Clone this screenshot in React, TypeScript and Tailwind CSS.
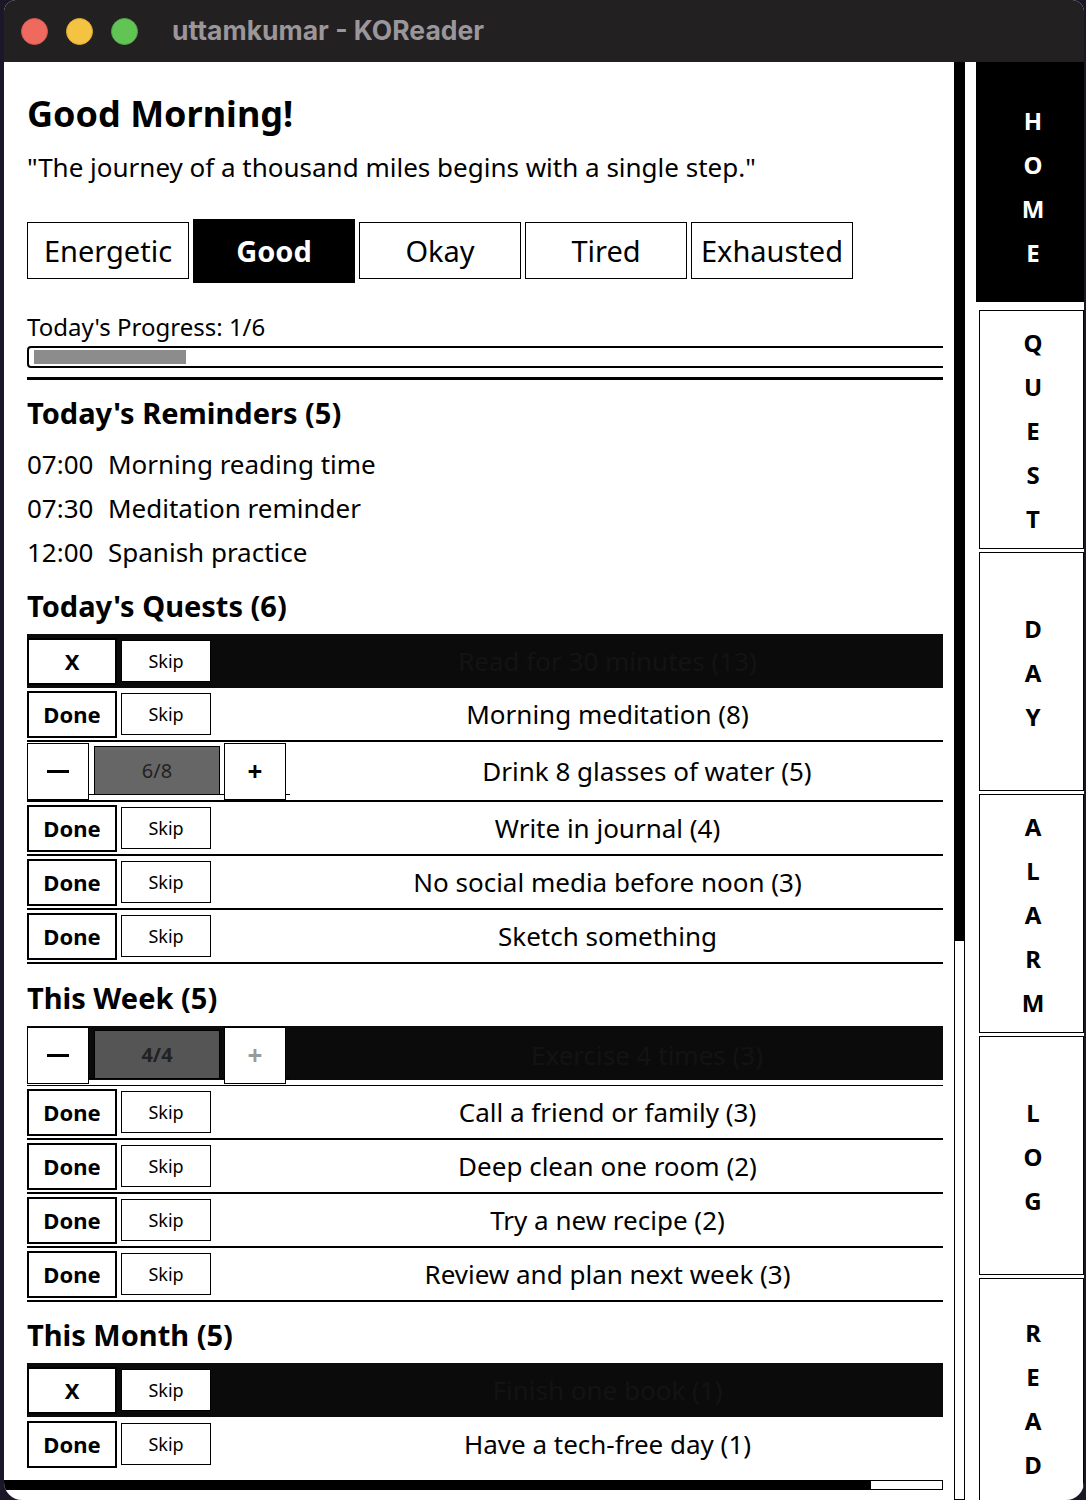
import clsx from 'clsx';

type Quest = {
  title: string;
  done?: boolean;
  count?: [number, number];
};

const moods = ['Energetic', 'Good', 'Okay', 'Tired', 'Exhausted'];

const reminders = [
  ['07:00', 'Morning reading time'],
  ['07:30', 'Meditation reminder'],
  ['12:00', 'Spanish practice'],
];

const today: Quest[] = [
  { title: 'Read for 30 minutes (13)', done: true },
  { title: 'Morning meditation (8)' },
  { title: 'Drink 8 glasses of water (5)', count: [6, 8] },
  { title: 'Write in journal (4)' },
  { title: 'No social media before noon (3)' },
  { title: 'Sketch something' },
];

const week: Quest[] = [
  { title: 'Exercise 4 times (3)', done: true, count: [4, 4] },
  { title: 'Call a friend or family (3)' },
  { title: 'Deep clean one room (2)' },
  { title: 'Try a new recipe (2)' },
  { title: 'Review and plan next week (3)' },
];

const month: Quest[] = [
  { title: 'Finish one book (1)', done: true },
  { title: 'Have a tech-free day (1)' },
];

const tabs = ['HOME', 'QUEST', 'DAY', 'ALARM', 'LOG', 'READ'];

function TitleBar() {
  return (
    <div className="h-[62px] shrink-0 bg-[#232022] flex items-center pl-[17px]">
      <div className="flex gap-[18px]">
        <span className="w-[27px] h-[27px] rounded-full bg-[#ee6a5f] border border-[#d5574d]" />
        <span className="w-[27px] h-[27px] rounded-full bg-[#f5c343] border border-[#d9a92f]" />
        <span className="w-[27px] h-[27px] rounded-full bg-[#61c454] border border-[#4fa844]" />
      </div>
      <span className="ml-[34px] text-[26.5px] font-bold text-[#9a9699] font-['Inter',sans-serif]">
        uttamkumar - KOReader
      </span>
    </div>
  );
}

function Title({ text, dim }: { text: string; dim?: boolean }) {
  return (
    <div
      className={clsx(
        'flex-1 h-full flex items-center justify-center pl-[61px] text-[26px] whitespace-nowrap',
        dim ? 'text-[#131313]' : 'text-black'
      )}
    >
      {text}
    </div>
  );
}

function QuestRow({ q, last }: { q: Quest; last?: boolean }) {
  if (q.count) {
    const [n, total] = q.count;
    return (
      <div
        className={clsx(
          'h-[60px] flex border-black',
          q.done ? 'border-b bg-[linear-gradient(to_bottom,#0b0b0b_54px,transparent_54px)]' : 'border-b-2'
        )}
      >
        <div className="flex items-start h-[53px] w-[263px] shrink-0 pt-[1px] border-b border-black">
          <div className="w-[62px] h-[57px] bg-white border border-black flex items-center justify-center">
            <span className="w-[22px] h-[3px] bg-black" />
          </div>
          <div
            className={clsx(
              'ml-[5px] mt-[3px] w-[126px] h-[49px] border border-black flex items-center justify-center text-[20px]',
              q.done ? 'bg-[#555] font-bold text-[#222]' : 'bg-[#666] text-[#222]'
            )}
          >
            {n}/{total}
          </div>
          <div
            className={clsx(
              'ml-[4px] w-[62px] h-[57px] bg-white border border-black flex items-center justify-center text-[26px] font-bold',
              n >= total ? 'text-[#9a9a9a]' : 'text-black'
            )}
          >
            +
          </div>
        </div>
        <Title text={q.title} dim={q.done} />
      </div>
    );
  }

  return (
    <div
      className={clsx(
        'h-[54px] flex items-center',
        q.done ? 'bg-[#0b0b0b]' : !last && 'border-b-2 border-black'
      )}
    >
      <div className="w-[90px] h-[47px] bg-white border-2 border-black flex items-center justify-center font-bold text-[22px]">
        {q.done ? 'X' : 'Done'}
      </div>
      <div className="ml-[4px] w-[90px] h-[42px] bg-white border border-black flex items-center justify-center text-[18px]">
        Skip
      </div>
      <Title text={q.title} dim={q.done} />
    </div>
  );
}

function Section({ title, items, mt }: { title: string; items: Quest[]; mt: string }) {
  return (
    <>
      <h2 className={clsx('text-[29px] font-bold leading-[38px]', mt)}>{title}</h2>
      <div className="mt-[9px]">
        {items.map((q, i) => (
          <QuestRow key={q.title} q={q} last={items === month && i === items.length - 1} />
        ))}
      </div>
    </>
  );
}

function Sidebar() {
  return (
    <div className="w-[108px] shrink-0 flex flex-col font-['Noto_Sans',sans-serif]">
      {tabs.map((t, i) => (
        <div
          key={t}
          className={clsx(
            'shrink-0 flex flex-col items-center justify-center text-[24px] font-bold',
            i === 0
              ? 'h-[240px] bg-black text-white pt-[10px] pl-[6px]'
              : 'h-[239px] ml-[3px] pl-[3px] pt-[3px] border border-black text-black',
            i === 1 && 'mt-[8px]',
            i > 1 && 'mt-[3px]'
          )}
        >
          {t.split('').map((c, j) => (
            <span key={j} className="leading-[44px]">
              {c}
            </span>
          ))}
        </div>
      ))}
    </div>
  );
}

export default function App() {
  return (
    <div className="w-[1086px] h-[1500px] bg-[#1b1728] overflow-hidden pl-[4px] pr-[2px]">
      <div className="h-full rounded-t-[12px] rounded-b-[18px] overflow-hidden bg-white flex flex-col">
        <TitleBar />
        <div className="flex flex-1 min-h-0">
          <main className="w-[950px] shrink-0 pl-[23px] pr-[11px] pt-[28px] overflow-hidden font-['Noto_Sans',sans-serif] text-black">
            <h1 className="text-[36px] font-bold leading-[48px]">Good Morning!</h1>
            <p className="mt-[12px] text-[26px] leading-[35px]">
              "The journey of a thousand miles begins with a single step."
            </p>

            <div className="mt-[37px] flex gap-[4px] h-[57px] items-center">
              {moods.map((m) =>
                m === 'Good' ? (
                  <div
                    key={m}
                    className="w-[162px] h-[64px] mt-[1px] bg-black text-white font-bold text-[29px] flex items-center justify-center"
                  >
                    {m}
                  </div>
                ) : (
                  <div
                    key={m}
                    className="w-[162px] h-[57px] border border-black text-[29px] flex items-center justify-center"
                  >
                    {m}
                  </div>
                )
              )}
            </div>

            <div className="mt-[32px] text-[24px] leading-[31px]">Today's Progress: 1/6</div>
            {/* the bar runs past the column, so its right edge is cut off */}
            <div className="mt-[4px] overflow-hidden">
              <div className="-mr-[20px] h-[22px] border-2 border-black rounded-l-[4px] p-[2px] pl-[5px]">
                <div className="h-full w-[152px] bg-[#8c8c8c]" />
              </div>
            </div>
            <div className="mt-[9px] h-[3px] bg-black" />

            <h2 className="mt-[14px] text-[29px] font-bold leading-[38px]">Today's Reminders (5)</h2>
            <div className="mt-[10px]">
              {reminders.map(([time, label]) => (
                <div key={time} className="flex text-[26px] leading-[44px]">
                  <span className="w-[81px]">{time}</span>
                  <span>{label}</span>
                </div>
              ))}
            </div>

            <Section title="Today's Quests (6)" items={today} mt="mt-[13px]" />
            <Section title="This Week (5)" items={week} mt="mt-[15px]" />
            <Section title="This Month (5)" items={month} mt="mt-[14px]" />

            <div className="mt-[9px] -ml-[23px] h-[10px] flex">
              <div className="flex-1 bg-black" />
              <div className="w-[73px] border border-black bg-white" />
            </div>
          </main>

          <div className="w-[11px] shrink-0 border border-black flex flex-col">
            <div className="h-[878px] bg-black" />
          </div>
          <div className="w-[11px] shrink-0" />
          <Sidebar />
        </div>
      </div>
    </div>
  );
}
